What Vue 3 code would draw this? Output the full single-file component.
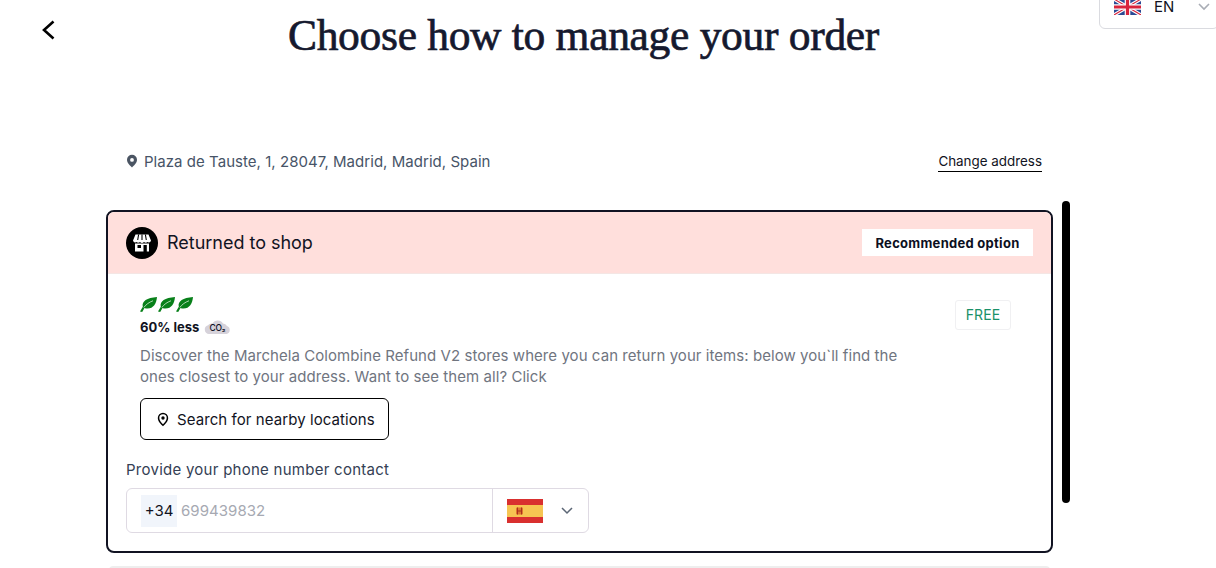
<template>
  <div class="page">
    <button class="back" aria-label="Back">
      <svg width="14" height="20" viewBox="0 0 14 20"><path d="M12.500 1.500 L3 10 L12.500 18.500" fill="none" stroke="#000" stroke-width="2.600" /></svg>
    </button>

    <div class="lang">
      <svg class="uk" width="27" height="16" viewBox="0 0 27 16">
        <rect width="27" height="16" fill="#2b4a94" />
        <path d="M0 0 L27 16 M27 0 L0 16" stroke="#fff" stroke-width="3.400" />
        <path d="M0 0 L27 16 M27 0 L0 16" stroke="#d8243c" stroke-width="1.100" />
        <path d="M13.500 0 V16 M0 8 H27" stroke="#fff" stroke-width="5.600" />
        <path d="M13.500 0 V16 M0 8 H27" stroke="#d8243c" stroke-width="3.200" />
      </svg>
      <span>EN</span>
      <svg width="12" height="8" viewBox="0 0 12 8"><path d="M1 1 L6 6 L11 1" fill="none" stroke="#a9adb5" stroke-width="1.600" /></svg>
    </div>

    <main class="main">
      <h1>Choose how to manage your order</h1>

      <div class="address">
        <div class="place">
          <svg width="12" height="14" viewBox="0 0 12 14"><path fill-rule="evenodd" d="M6 .8a5 5 0 0 1 5 5c0 3.300-3.400 6.200-5 7.600C4.400 12 1 9.100 1 5.800a5 5 0 0 1 5-5Zm0 3.200a1.900 1.900 0 1 0 0 3.800 1.900 1.900 0 0 0 0-3.800Z" fill="#4b5563" /></svg>
          <span>Plaza de Tauste, 1, 28047, Madrid, Madrid, Spain</span>
        </div>
        <a class="change">Change address</a>
      </div>

      <div class="scroll-area">
        <section class="card">
          <header class="card-head">
            <div class="head-left">
              <span class="shop-icon">
                <svg width="20" height="20" viewBox="0 0 20 20">
                  <path d="M3.500 1.500 H16.500 L19 7.500 A2.200 2.200 0 0 1 15.500 9 A3 3 0 0 1 12 9 A3 3 0 0 1 8 9 A3 3 0 0 1 4.500 9 A2.200 2.200 0 0 1 1 7.500 Z" fill="#fff" />
                  <path d="M6.600 1.500 L5.700 7 M10 1.500 V7 M13.400 1.500 L14.300 7" stroke="#000" stroke-width="1.100" />
                  <path fill-rule="evenodd" d="M3 10.500 H17 V18.500 H3 Z M5.500 12 V15 H9 V12 Z M11.500 12 V18.500 H14.800 V12 Z" fill="#fff" />
                </svg>
              </span>
              <span class="head-title">Returned to shop</span>
            </div>
            <span class="recommended">Recommended option</span>
          </header>

          <div class="card-body">
            <div class="info">
              <div class="eco">
                <div class="leaves">
                  <svg v-for="n in 3" :key="n" width="17" height="15" viewBox="0 0 17 14" preserveAspectRatio="none">
                    <path d="M17 0 C16.500 6 13.500 10.800 7.500 10.800 C6.300 10.800 5.300 10.600 4.500 10.200 L2.200 14 L0 13.500 L2.800 9 C1.500 4 7 .6 17 0 Z" fill="#08801a" />
                    <path d="M3.800 9.800 C6.200 6.800 9 5 13 3.500" fill="none" stroke="#cfe8cf" stroke-width=".8" />
                  </svg>
                </div>
                <div class="less">
                  <b>60% less</b>
                  <svg class="co2" width="27" height="18" viewBox="0 0 27 18">
                    <path d="M5 17 A4.500 4.500 0 0 1 4 8.200 A4.500 4.500 0 0 1 8.500 6.500 A6 6 0 0 1 19 6.500 A5 5 0 0 1 23 9 A4.200 4.200 0 0 1 22.500 17 Z" fill="#d6d2da" />
                    <text x="13.500" y="14" text-anchor="middle" font-size="8.500" font-weight="500" fill="#0c0f1e">CO₂</text>
                  </svg>
                </div>
              </div>
              <p class="desc">Discover the Marchela Colombine Refund V2 stores where you can return your items: below you`ll find the ones closest to your address. Want to see them all? Click</p>
              <button class="search">
                <svg width="12" height="15" viewBox="0 0 12 15"><path fill-rule="evenodd" d="M6 .8a5.200 5.200 0 0 1 5.200 5.200c0 3.400-3.300 6.500-5.200 8.200C4.100 12.500.8 9.400.8 6A5.200 5.200 0 0 1 6 .8Zm0 1.500A3.700 3.700 0 0 0 2.300 6c0 2.300 2.200 4.700 3.700 6.200C7.500 10.700 9.700 8.300 9.700 6A3.700 3.700 0 0 0 6 2.300Zm0 2a1.700 1.700 0 1 1 0 3.400 1.700 1.700 0 0 1 0-3.400Z" fill="#000" /></svg>
                <span>Search for nearby locations</span>
              </button>
            </div>
            <span class="free">FREE</span>
          </div>

          <div class="phone">
            <label>Provide your phone number contact</label>
            <div class="phone-field">
              <div class="phone-input">
                <span class="prefix">+34</span>
                <span class="number">699439832</span>
              </div>
              <div class="country">
                <svg width="36" height="24" viewBox="0 0 36 24">
                  <rect width="36" height="24" fill="#d9302f" />
                  <rect y="6" width="36" height="12" fill="#f6c552" />
                  <rect x="9" y="8.500" width="7" height="7" rx="1" fill="#e0752f" />
                  <path d="M10.500 8.500 V15.500 M14.500 8.500 V15.500 M10.500 12 H14.500" stroke="#a8321f" stroke-width="1" />
                </svg>
                <svg width="12" height="8" viewBox="0 0 12 8"><path d="M1 1 L6 6 L11 1" fill="none" stroke="#5b6675" stroke-width="1.500" /></svg>
              </div>
            </div>
          </div>
        </section>
        <div class="next-card"></div>
        <div class="scrollbar"></div>
      </div>
    </main>
  </div>
</template>

<script setup>
</script>

<style>
html, body {
  overflow: hidden;
  background: #fff;
}
</style>

<style scoped>
.page {
  position: relative;
  width: 1216px;
  height: 568px;
  overflow: hidden;
  font-family: Inter, "Noto Sans", sans-serif;
  color: #111322;
}

.back {
  position: absolute;
  left: 41px;
  top: 20px;
  padding: 0;
  border: 0;
  background: none;
}

.lang {
  position: absolute;
  left: 1099px;
  top: -12px;
  width: 120px;
  height: 41px;
  box-sizing: border-box;
  padding: 0 0 4px 14px;
  display: flex;
  align-items: center;
  gap: 13px;
  border: 1px solid #dadbe0;
  border-radius: 6px;
  font-size: 15px;
  color: #111322;
}

.lang span {
  width: 31px;
}

.main {
  width: 947px;
  margin-left: 106px;
}

h1 {
  margin: 0;
  padding: 9px 0 0 8px;
  height: 53px;
  text-align: center;
  font-family: "Liberation Serif", serif;
  font-size: 43.500px;
  line-height: 52px;
  font-weight: 400;
  letter-spacing: -0.3px;
  color: #15192e;
  -webkit-text-stroke: 0.7px #15192e;
}

.address {
  margin-top: 87px;
  padding: 0 11px 0 20px;
  height: 24px;
  display: flex;
  justify-content: space-between;
  align-items: center;
}

.place {
  display: flex;
  align-items: center;
  gap: 6px;
  font-size: 15px;
  letter-spacing: 0.04px;
  color: #475467;
}

.change {
  font-size: 13.400px;
  line-height: 20px;
  color: #111322;
  border-bottom: 1px solid #000;
}

.scroll-area {
  position: relative;
  margin-top: 37px;
}

.scrollbar {
  position: absolute;
  left: 956px;
  top: -9px;
  width: 8px;
  height: 302px;
  border-radius: 4px;
  background: #000;
}

.card {
  height: 343px;
  box-sizing: border-box;
  border: 2px solid #111322;
  border-radius: 8px;
  overflow: hidden;
}

.card-head {
  height: 61px;
  padding: 0 18px;
  display: flex;
  align-items: center;
  justify-content: space-between;
  background: #ffdfdc;
  border-bottom: 1px solid #f4e6e4;
}

.head-left {
  display: flex;
  align-items: center;
  gap: 9px;
}

.shop-icon {
  width: 32px;
  height: 32px;
  border-radius: 50%;
  background: #000;
  display: flex;
  align-items: center;
  justify-content: center;
}

.head-title {
  font-size: 18px;
  letter-spacing: -0.02px;
  color: #111322;
}

.recommended {
  width: 171px;
  height: 27px;
  background: #fff;
  display: flex;
  align-items: center;
  justify-content: center;
  font-size: 13px;
  font-weight: 700;
  letter-spacing: 0.28px;
  color: #0c0f1e;
}

.card-body {
  padding: 23px 40px 0 32px;
  display: flex;
  justify-content: space-between;
  align-items: flex-start;
}

.info {
  width: 770px;
}

.leaves {
  height: 15px;
  display: flex;
  gap: 1px;
}

.less {
  margin-top: 5px;
  height: 20px;
  display: flex;
  align-items: center;
  gap: 5px;
}

.less b {
  font-size: 13px;
  font-weight: 700;
  color: #111322;
}

.co2 {
  margin-top: -2px;
}

.desc {
  margin: 8px 0 0;
  font-size: 15px;
  line-height: 21px;
  letter-spacing: 0.06px;
  color: #70757f;
}

.search {
  margin-top: 11px;
  width: 249px;
  height: 42px;
  padding: 0 0 0 16px;
  display: flex;
  align-items: center;
  gap: 8px;
  background: #fff;
  border: 1px solid #000;
  border-radius: 6px;
  font-family: inherit;
  font-size: 15px;
  letter-spacing: 0.08px;
  color: #111322;
}

.free {
  width: 56px;
  height: 30px;
  margin-top: 3px;
  padding-bottom: 2px;
  box-sizing: border-box;
  border: 1px solid #f0f0f2;
  border-radius: 3px;
  display: flex;
  align-items: center;
  justify-content: center;
  font-size: 14px;
  letter-spacing: 0.1px;
  color: #1a9168;
}

.phone {
  padding: 20px 18px 0;
}

.phone label {
  display: block;
  height: 20px;
  font-size: 15px;
  line-height: 20px;
  letter-spacing: 0.26px;
  color: #344054;
}

.phone-field {
  margin-top: 8px;
  width: 463px;
  height: 45px;
  box-sizing: border-box;
  border: 1px solid #dfdae3;
  border-radius: 6px;
  display: flex;
}

.phone-input {
  width: 366px;
  box-sizing: border-box;
  padding-left: 14px;
  display: flex;
  align-items: center;
  gap: 4px;
  border-right: 1px solid #dfdae3;
}

.prefix {
  width: 36px;
  height: 32px;
  background: #f1f5fb;
  display: flex;
  align-items: center;
  justify-content: center;
  font-size: 15px;
  color: #111322;
}

.number {
  font-size: 15px;
  letter-spacing: 0.05px;
  color: #a6a9b2;
}

.country {
  flex: 1;
  padding-left: 14px;
  display: flex;
  align-items: center;
  gap: 18px;
}

.next-card {
  margin: 13px 3px 0;
  height: 12px;
  background: #eeeeee;
  border-radius: 4px;
}
</style>
